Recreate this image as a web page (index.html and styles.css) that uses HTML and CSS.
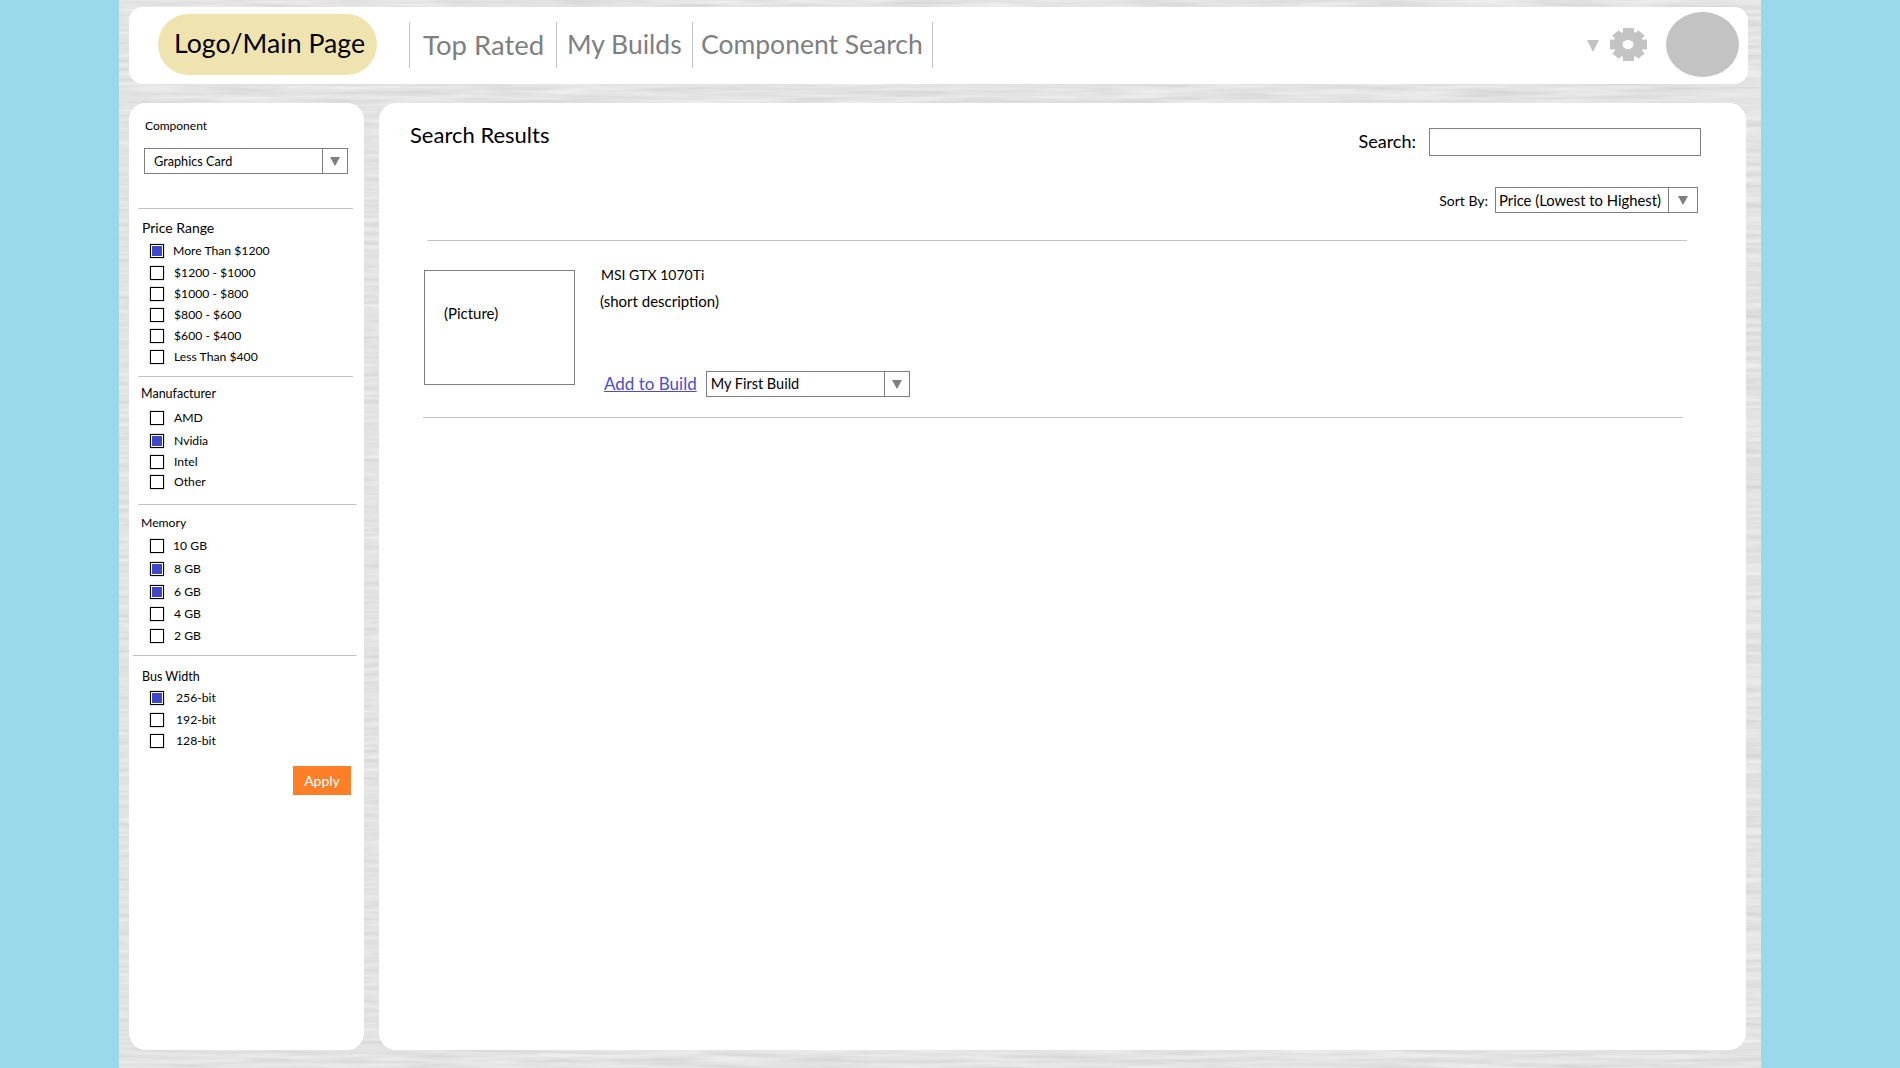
FILE: index.html
```html
<!DOCTYPE html>
<html lang="en">
<head>
    <meta charset="UTF-8">
    <title>Component Search</title>
    <link rel="stylesheet" href="styles.css">
</head>
<body>
    <div class="stage">
        <!-- brushed grey backdrop -->
        <svg class="grain" width="1642" height="1068" aria-hidden="true">
            <filter id="streaks" color-interpolation-filters="sRGB" x="0" y="0" width="100%" height="100%">
                <feTurbulence type="fractalNoise" baseFrequency="0.012 0.22" numOctaves="3" seed="7"/>
                <feColorMatrix type="matrix" values="0.14 0 0 0 0.82  0.14 0 0 0 0.82  0.14 0 0 0 0.82  0 0 0 0 1"/>
            </filter>
            <rect width="1642" height="1068" filter="url(#streaks)"/>
        </svg>

        <header class="topbar">
            <a class="logo">Logo/Main Page</a>
            <nav class="nav">
                <a class="nav-top">Top Rated</a>
                <a class="nav-builds">My Builds</a>
                <a class="nav-search">Component Search</a>
            </nav>
            <div class="account">
                <span class="account-arrow"></span>
                <svg class="gear" width="37" height="33" viewBox="0 0 37 33">
                    <g fill="#c3c3c3" transform="translate(18.5 16.5) scale(1 .88)">
                        <circle r="15"/>
                        <rect x="-5.5" y="-18.7" width="11" height="37.4"/>
                        <rect x="-18.5" y="-5.5" width="37" height="11"/>
                        <rect x="-4.5" y="-18.5" width="9" height="37" transform="rotate(45)"/>
                        <rect x="-4.5" y="-18.5" width="9" height="37" transform="rotate(-45)"/>
                    </g>
                    <ellipse cx="18" cy="16.5" rx="5.5" ry="4.5" fill="#fff"/>
                </svg>
                <span class="avatar"></span>
            </div>
        </header>

        <div class="columns">
            <aside class="sidebar">
                <div class="comp-label">Component</div>
                <div class="drop drop-comp">
                    <span class="drop-text">Graphics Card</span>
                    <span class="drop-btn"><span class="arrow"></span></span>
                </div>
                <hr class="rule rule-a">

                <div class="group-title title-price">Price Range</div>
                <label class="row gap-8 row-tight"><input type="checkbox" checked><span>More Than $1200</span></label>
                <label class="row gap-8"><input type="checkbox"><span>$1200 - $1000</span></label>
                <label class="row gap-7"><input type="checkbox"><span>$1000 - $800</span></label>
                <label class="row gap-7"><input type="checkbox"><span>$800 - $600</span></label>
                <label class="row gap-7"><input type="checkbox"><span>$600 - $400</span></label>
                <label class="row gap-7"><input type="checkbox"><span>Less Than $400</span></label>
                <hr class="rule rule-b">

                <div class="group-title title-maker">Manufacturer</div>
                <label class="row gap-9"><input type="checkbox"><span>AMD</span></label>
                <label class="row gap-9"><input type="checkbox" checked><span>Nvidia</span></label>
                <label class="row gap-7"><input type="checkbox"><span>Intel</span></label>
                <label class="row gap-6"><input type="checkbox"><span>Other</span></label>
                <hr class="rule rule-c">

                <div class="group-title title-memory">Memory</div>
                <label class="row gap-8 row-tight"><input type="checkbox"><span>10 GB</span></label>
                <label class="row gap-9"><input type="checkbox" checked><span>8 GB</span></label>
                <label class="row gap-9"><input type="checkbox" checked><span>6 GB</span></label>
                <label class="row gap-8"><input type="checkbox"><span>4 GB</span></label>
                <label class="row gap-8"><input type="checkbox"><span>2 GB</span></label>
                <hr class="rule rule-d">

                <div class="group-title title-bus">Bus Width</div>
                <label class="row gap-6 row-wide"><input type="checkbox" checked><span>256-bit</span></label>
                <label class="row gap-8 row-wide"><input type="checkbox"><span>192-bit</span></label>
                <label class="row gap-7 row-wide"><input type="checkbox"><span>128-bit</span></label>

                <button class="apply">Apply</button>
            </aside>

            <main class="results">
                <div class="results-head">
                    <h1>Search Results</h1>
                    <div class="search">
                        <label for="q">Search:</label>
                        <input id="q" type="text">
                    </div>
                </div>
                <div class="sort">
                    <span>Sort By:</span>
                    <div class="drop drop-sort">
                        <span class="drop-text">Price (Lowest to Highest)</span>
                        <span class="drop-btn"><span class="arrow"></span></span>
                    </div>
                </div>
                <hr class="rule line-top">

                <div class="result">
                    <div class="picture">(Picture)</div>
                    <div class="details">
                        <div class="name">MSI GTX 1070Ti</div>
                        <div class="desc">(short description)</div>
                        <div class="add-row">
                            <a class="add-link" href="#">Add to Build</a>
                            <div class="drop drop-build">
                                <span class="drop-text">My First Build</span>
                                <span class="drop-btn"><span class="arrow"></span></span>
                            </div>
                        </div>
                    </div>
                </div>
                <hr class="rule line-bottom">
            </main>
        </div>
    </div>
</body>
</html>
```

FILE: styles.css
```css
* { box-sizing: border-box; }

html, body {
    height: 100%;
}
body {
    margin: 0;
    padding-left: 119px;
    background: #99d9ea;
    font-family: "Lato", "Open Sans", sans-serif;
    color: #000;
    overflow: hidden;
}

.stage {
    position: relative;
    width: 1642px;
    height: 1068px;
    padding: 7px 13px 0 10px;
    background: #e4e4e4;
}
.grain {
    position: absolute;
    top: 0;
    left: 0;
}

/* top bar */
.topbar {
    position: relative;
    display: flex;
    align-items: center;
    width: 1619px;
    height: 77px;
    padding-bottom: 2px;
    background: #fff;
    border-radius: 14px;
}
.logo {
    display: flex;
    align-items: center;
    justify-content: center;
    width: 219px;
    height: 61px;
    margin-left: 29px;
    padding: 0 0 4px 4px;
    background: #efe4b0;
    border-radius: 31px;
    font-size: 26.7px;
}
.nav {
    display: flex;
    height: 46px;
    margin-left: 32px;
    border-right: 1px solid #c3c3c3;
}
.nav a {
    display: flex;
    align-items: center;
    padding-bottom: 1px;
    border-left: 1px solid #c3c3c3;
    color: #7f7f7f;
    font-size: 26.5px;
}
.nav-top { width: 147px; padding-left: 13px; }
.nav .nav-top { font-size: 27.5px; }
.nav-builds { width: 136px; padding-left: 10px; }
.nav-search { width: 240px; padding-left: 8px; }

.account {
    display: flex;
    align-items: center;
    margin-left: auto;
    margin-right: 9px;
}
.account-arrow {
    width: 0;
    height: 0;
    margin-top: 2px;
    border-left: 6px solid transparent;
    border-right: 6px solid transparent;
    border-top: 12px solid #c3c3c3;
}
.gear { margin-left: 11px; }
.avatar {
    width: 73px;
    height: 65px;
    margin-left: 19px;
    border-radius: 50%;
    background: #c3c3c3;
}

/* columns */
.columns {
    position: relative;
    display: flex;
    gap: 15px;
    margin-top: 19px;
}
.sidebar, .results {
    height: 947px;
    background: #fff;
    border-radius: 17px;
}
.sidebar {
    width: 235px;
    padding-top: 15px;
    font-size: 12.2px;
}
.results {
    width: 1367px;
    padding: 18px 45px 0 31px;
}

.rule {
    height: 1px;
    margin: 0;
    border: 0;
    background: #c3c3c3;
}
.rule-a { width: 215px; margin: 34px 0 0 9px; }
.rule-b { width: 215px; margin: 12px 0 0 9px; }
.rule-c { width: 219px; margin: 15px 0 0 9px; }
.rule-d { width: 224px; margin: 12px 0 0 4px; }

/* fake select */
.drop {
    display: flex;
    height: 26px;
    border: 1px solid #7f7f7f;
    background: #fff;
}
.drop-text {
    flex: 1;
    line-height: 24px;
    white-space: nowrap;
}
.drop-btn {
    display: flex;
    align-items: center;
    justify-content: center;
    border-left: 1px solid #7f7f7f;
}
.arrow {
    width: 0;
    height: 0;
    border-left: 5px solid transparent;
    border-right: 5px solid transparent;
    border-top: 9px solid #7f7f7f;
}

.comp-label {
    margin-left: 16px;
    line-height: 16px;
    font-size: 12px;
}
.drop-comp {
    width: 204px;
    margin: 14px 0 0 15px;
    font-size: 12.7px;
}
.drop-comp .drop-text { padding-left: 9px; }
.drop-comp .drop-btn { width: 25px; }

/* filter groups */
.group-title {
    margin-left: 12px;
    line-height: 16px;
    font-size: 12.5px;
}
.title-price { margin: 10px 0 0 13px; line-height: 17px; font-size: 14px; }
.title-maker { margin-top: 9px; }
.title-memory { margin-top: 10px; font-size: 12.2px; }
.title-bus { margin: 13px 0 0 13px; }

.row {
    display: flex;
    align-items: center;
    gap: 10px;
    height: 14px;
    margin-left: 21px;
}
.row span {
    padding-bottom: 2px;
}
.row-tight { gap: 9px; }
.row-wide { gap: 12px; }
.gap-6 { margin-top: 6px; }
.gap-7 { margin-top: 7px; }
.gap-8 { margin-top: 8px; }
.gap-9 { margin-top: 9px; }

.row input {
    appearance: none;
    width: 14px;
    height: 14px;
    margin: 0;
    border: 1px solid #000;
    background: #fff;
    box-shadow: 0 0 1px rgba(0, 0, 0, 0.6);
}
.row input:checked {
    background: #3f48cc;
    box-shadow: 0 0 1px rgba(0, 0, 0, 0.6), inset 0 0 0 1px #fff;
}

.apply {
    display: block;
    width: 58px;
    height: 29px;
    margin: 18px 0 0 164px;
    border: none;
    background: #ff7f27;
    color: #fff;
    font: 14px "Lato", sans-serif;
}

/* results */
.results-head {
    display: flex;
    justify-content: space-between;
}
h1 {
    margin: 0;
    font-size: 22px;
    font-weight: 400;
    line-height: 28px;
}
.search {
    display: flex;
    align-items: center;
    gap: 13px;
    margin-top: 7px;
    font-size: 18px;
}
.search label {
    padding-bottom: 2px;
}
.search input {
    width: 272px;
    height: 28px;
    margin: 0;
    border: 1px solid #7f7f7f;
}
.sort {
    display: flex;
    justify-content: flex-end;
    align-items: center;
    gap: 7px;
    margin: 31px 3px 0 0;
    font-size: 14px;
}
.drop-sort { width: 203px; font-size: 14.8px; }
.drop-sort .drop-text { padding-left: 3px; }
.drop-sort .drop-btn { width: 29px; }

.line-top { width: 1260px; margin: 27px 0 0 17px; }
.line-bottom { width: 1260px; margin: 20px 0 0 13px; }

.result {
    display: flex;
    margin: 29px 0 0 14px;
    font-size: 14px;
}
.picture {
    width: 151px;
    height: 115px;
    padding: 34px 0 0 19px;
    border: 1px solid #7f7f7f;
    font-size: 15px;
    line-height: 16px;
}
.details {
    margin-left: 25px;
    height: 127px;
}
.name {
    margin: -3px 0 0 1px;
    line-height: 16px;
}
.desc {
    margin-top: 10px;
    font-size: 15px;
    line-height: 16px;
}
.add-row {
    display: flex;
    align-items: center;
    gap: 9px;
    margin: 62px 0 0 4px;
}
.add-link {
    margin-bottom: 2px;
    color: #4b4bd6;
    font-size: 17px;
}
.drop-build { width: 204px; font-size: 14.5px; }
.drop-build .drop-text { padding-left: 4px; }
.drop-build .drop-btn { width: 25px; }
```
